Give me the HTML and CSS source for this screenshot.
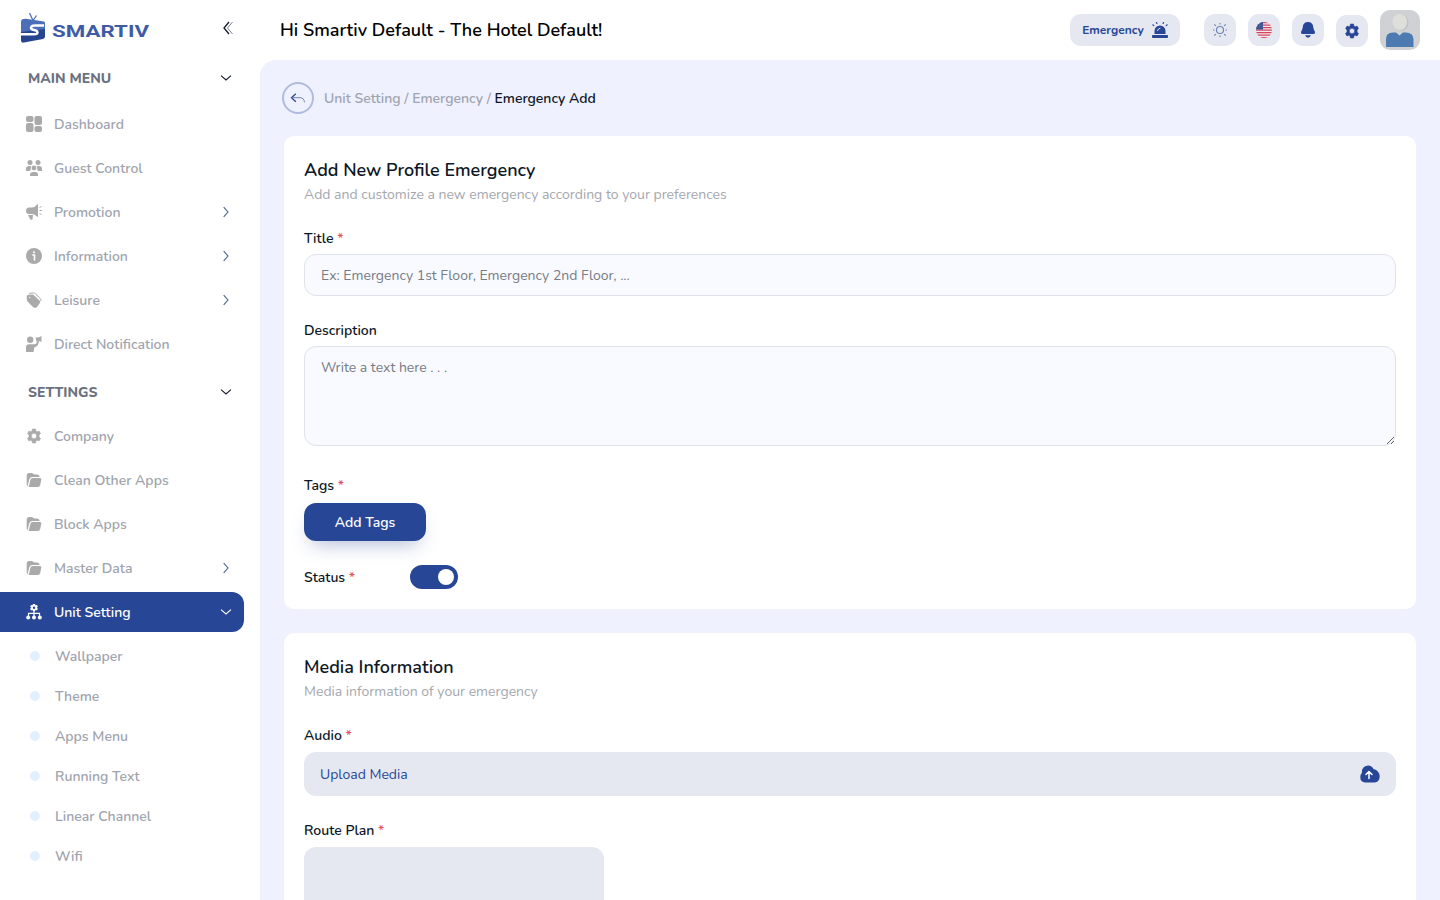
FILE: index.html
```html
<!doctype html>
<html lang="en">
  <head>
    <meta charset="UTF-8" />
    <meta name="viewport" content="width=device-width, initial-scale=1.0" />
    <title>Smartiv - Emergency Add</title>
    <link rel="stylesheet" href="styles.css">
  </head>
  <body>
    <!-- shared icons -->
    <svg class="sprite" width="0" height="0">
      <symbol id="right" viewBox="0 0 16 16"><path d="M5.700 3.200l4.300 4.800-4.300 4.800" fill="none" stroke="currentColor" stroke-width="1.1" /></symbol>
      <symbol id="down" viewBox="0 0 16 16"><path d="M3 5.700l5 4.300 5-4.300" fill="none" stroke="currentColor" stroke-width="1.1" /></symbol>
      <symbol id="folder" viewBox="0 0 16 16">
        <path d="M.7 13V3.500q0-2.500 2.500-2.500h2q1.300 0 2 .8t2 .7h1.800q2.500 0 2.500 2.500H6.500Q4 5 3.300 7.200L1.500 14.200Q.7 13.700.7 13z" />
        <path d="M2.700 15L4.400 7.700Q4.900 6 6.500 6H14q1.700 0 1.300 1.600L14.200 13Q13.700 15 11.700 15z" />
      </symbol>
      <symbol id="gear" viewBox="0 0 16 16">
        <path fill-rule="evenodd" stroke="currentColor" stroke-width=".6" stroke-linejoin="round" d="M6.500 1h3l.4 1.900 1.300.8 1.900-.6 1.400 2.500-1.400 1.300v2.200l1.400 1.300-1.400 2.500-1.900-.6-1.300.8-.4 1.900h-3l-.4-1.900-1.300-.8-1.900.6-1.400-2.500L3 9.100V6.900L1.600 5.600 3 3.100l1.900.6 1.200-.8zM8 5.300a2.700 2.700 0 1 0 0 5.400 2.700 2.700 0 0 0 0-5.400z" />
      </symbol>
    </svg>

    <div class="sidebar">
      <div class="brand">
        <svg class="logo" width="130" height="32" viewBox="0 0 130 32">
          <path d="M1 9.500Q1 7.500 3 7l3-.3 18 2.800q1 .2 1 1.500v9H1z" fill="#4b6fb8" />
          <path d="M1 20l24-3v7.500q0 2-2 2.400L4 30.600q-3 .6-3-2z" fill="#27458f" />
          <path d="M24 13.500h-9q-4 0-4 2.300 0 1.700 3 2.200 3.500.6 3.500 2.500 0 1.800-3.500 1.800H1" fill="none" stroke="#fff" stroke-width="2.400" />
          <path d="M13 8.500L9.500 1M13 8.500l3.500-5" stroke="#4b6fb8" stroke-width="1.300" fill="none" />
          <text x="32" y="24.800" textLength="97" lengthAdjust="spacingAndGlyphs">SMARTIV</text>
        </svg>
        <svg class="collapse" width="14" height="14" viewBox="0 0 14 14">
          <path d="M8 1L3 7l5 6" fill="none" stroke="#111827" stroke-width="1.300" />
          <path d="M11.500 1l-5 6 5 6" fill="none" stroke="#7b808b" stroke-width="1" />
        </svg>
      </div>

      <div class="menu-title"><span>MAIN MENU</span><svg class="chevron"><use href="#down" /></svg></div>
      <ul class="menu main-menu">
        <li><a href="#">
          <svg class="icon" viewBox="0 0 16 16"><rect width="7.500" height="6" rx="2" /><rect y="7" width="7.500" height="9" rx="2" /><rect x="8.500" width="7.500" height="9" rx="2" /><rect x="8.500" y="10" width="7.500" height="6" rx="2" /></svg>
          <span>Dashboard</span></a></li>
        <li><a href="#">
          <svg class="icon" viewBox="0 0 16 16"><circle cx="4" cy="2.500" r="2.500" /><circle cx="12" cy="2.500" r="2.500" /><circle cx="8" cy="8" r="2.400" /><path d="M0 11V9q0-3 3-3h2L4.800 9 4 11zM16 11V9q0-3-3-3h-2l.2 3 .8 2zM4 16v-1.500Q4 12 7 12h2q3 0 3 2.500V16z" /></svg>
          <span>Guest Control</span></a></li>
        <li><a href="#">
          <svg class="icon" viewBox="0 0 16 16"><path d="M0 7q0-3.500 3-3.500h3q3 0 5-3l1-.5v13l-1-.5q-2-2.500-5-2.500H3Q0 10 0 7zM2 11h5l-.5 4.500q-2 1-2.700-1z" /><path d="M13.500 6.500H16M13.500 3.500l2-1M13.500 9.500l2 1" stroke="currentColor" /></svg>
          <span>Promotion</span><svg class="chevron"><use href="#right" /></svg></a></li>
        <li><a href="#">
          <svg class="icon" viewBox="0 0 16 16"><circle cx="8" cy="8" r="8" /><circle cx="8" cy="4.300" r="1" fill="#fff" /><path d="M6.800 7H8.500v5" fill="none" stroke="#fff" stroke-width="1.500" stroke-linecap="round" /></svg>
          <span>Information</span><svg class="chevron"><use href="#right" /></svg></a></li>
        <li><a href="#">
          <svg class="icon" viewBox="0 0 16 16"><path d="M.8 4.500Q.8 3 2.300 2.800L7 2.500l6.500 6q1.500 1.500 0 3L11 14.900q-2 1.900-4 0l-5-5Q.8 8.700.8 7.700z" /><path d="M3 1.400L7.500.9q1 0 2 1l4.600 4.400q1.200 1.200.7 2.700" fill="none" stroke="currentColor" /><circle cx="3.800" cy="5.600" r=".7" fill="#fff" /></svg>
          <span>Leisure</span><svg class="chevron"><use href="#right" /></svg></a></li>
        <li><a href="#">
          <svg class="icon" viewBox="0 0 16 16"><circle cx="4.200" cy="3.700" r="3.200" /><path d="M0 16v-4.500Q0 8.200 3 8.200h5.500q2.300 0 2.500-3.200h1.800q0 5.300-4.300 6.200L7.500 16zM9.500 1.500q3 .5 6-1.500v6q-2.500-1.500-5-.5z" /></svg>
          <span>Direct Notification</span></a></li>
      </ul>

      <div class="menu-title settings"><span>SETTINGS</span><svg class="chevron"><use href="#down" /></svg></div>
      <ul class="menu">
        <li><a href="#"><svg class="icon"><use href="#gear" /></svg><span>Company</span></a></li>
        <li><a href="#"><svg class="icon"><use href="#folder" /></svg><span>Clean Other Apps</span></a></li>
        <li><a href="#"><svg class="icon"><use href="#folder" /></svg><span>Block Apps</span></a></li>
        <li><a href="#"><svg class="icon"><use href="#folder" /></svg><span>Master Data</span><svg class="chevron"><use href="#right" /></svg></a></li>
        <li><a href="#" class="active">
          <svg class="icon" viewBox="0 0 16 16"><path fill-rule="evenodd" d="M7 0h2l.4 1.300 1.500-.4 1 1.500-1 1.200 1 1.300-1 1.500-1.500-.4L9 7.300H7L6.600 6l-1.500.4-1-1.500 1-1.300-1-1.200 1-1.500 1.500.4zM8 2.500a1.200 1.200 0 1 0 0 2.400 1.200 1.200 0 0 0 0-2.400z" /><path d="M8 6.500V12M2.500 12V9.300h11V12" fill="none" stroke="currentColor" stroke-width="1.200" /><circle cx="2.200" cy="13.500" r="2" /><circle cx="8" cy="13.500" r="2" /><circle cx="13.800" cy="13.500" r="2" /></svg>
          <span>Unit Setting</span><svg class="chevron"><use href="#down" /></svg></a></li>
      </ul>
      <ul class="submenu">
        <li><a href="#">Wallpaper</a></li>
        <li><a href="#">Theme</a></li>
        <li><a href="#">Apps Menu</a></li>
        <li><a href="#">Running Text</a></li>
        <li><a href="#">Linear Channel</a></li>
        <li><a href="#">Wifi</a></li>
      </ul>
    </div>

    <div class="main">
      <div class="header">
        <h1>Hi Smartiv Default - The Hotel Default!</h1>
        <div class="tools">
          <button class="emergency-button">
            <span>Emergency</span>
            <svg width="16" height="16" viewBox="0 0 16 16"><path d="M2.500 12V9a5.500 5.500 0 0 1 11 0v3z" /><rect y="13" width="16" height="3" rx="1" /><path d="M.8 2.800l1 .8M15.200 2.800l-1 .8M4.500.5l.4 1M11.500.5l-.4 1" stroke="#284696" stroke-width="1.200" stroke-linecap="round" /><path d="M5.500 8.500Q6 6.500 8 6.200" fill="none" stroke="#e5e8f1" stroke-linecap="round" /></svg>
          </button>
          <button class="tool-button">
            <svg width="16" height="16" viewBox="0 0 16 16"><g fill="none" stroke="#6f84b7" stroke-width="1.200"><circle cx="8" cy="8" r="3.500" /><path d="M8 1v1.500M8 13.500V15M1 8h1.500M13.500 8H15M2.300 2.300l1.500 1.500M12.200 12.200l1.500 1.500M2.300 13.700l1.500-1.500M12.200 3.800l1.500-1.500" /></g></svg>
          </button>
          <button class="tool-button">
            <svg width="16" height="16" viewBox="0 0 16 16">
              <clipPath id="round"><circle cx="8" cy="8" r="8" /></clipPath>
              <g clip-path="url(#round)"><rect width="16" height="16" fill="#f2e8ee" /><path d="M0 .6h16M0 3.100h16M0 5.600h16M0 8.100h16M0 10.600h16M0 13.100h16M0 15.600h16" stroke="#d4455c" stroke-width="1.250" /><rect width="7" height="7.500" fill="#364e8d" /><path d="M1 3h6M1 5h6" stroke="#a6b0cd" stroke-width=".6" stroke-dasharray=".8 1" /></g>
            </svg>
          </button>
          <button class="tool-button">
            <svg width="16" height="16" viewBox="0 0 16 16"><path d="M8 0q5 0 5.300 5.500.2 1.500 1.300 3.500 1.300 3-1.300 3H2.700q-2.600 0-1.300-3 1.100-2 1.300-3.500Q3 0 8 0zM5 13.300h6Q10 15.700 8 15.700T5 13.300z" /></svg>
          </button>
          <button class="tool-button lower"><svg width="16" height="16"><use href="#gear" /></svg></button>
          <svg class="avatar" width="40" height="40" viewBox="0 0 40 40"><rect width="40" height="40" fill="#cfd1d4" /><ellipse cx="21" cy="12.500" rx="7.500" ry="8" fill="#c0c1c1" /><ellipse cx="19.800" cy="12" rx="7.300" ry="8" fill="#dededb" /><path d="M6 37v-8q0-6.500 7-6.500h3l3.500 3 3.500-3h3q7 0 7.500 6.500v8z" fill="#4d7bb1" /></svg>
        </div>
      </div>

      <div class="content">
        <div class="breadcrumb">
          <a href="#" class="back"><svg width="16" height="16" viewBox="0 0 16 16"><path d="M5.800 3.700L1.500 7.700l4.300 4" fill="none" stroke="#284696" stroke-width="1.300" /><path d="M2 7.700h8q4 0 4.500 4.600" fill="none" stroke="#7186b9" /></svg></a>
          <p>Unit Setting / Emergency / <strong>Emergency Add</strong></p>
        </div>

        <div class="card">
          <h2>Add New Profile Emergency</h2>
          <p class="subtitle">Add and customize a new emergency according to your preferences</p>
          <div class="field">
            <label for="title">Title <i>*</i></label>
            <input id="title" type="text" placeholder="Ex: Emergency 1st Floor, Emergency 2nd Floor, ..." />
          </div>
          <div class="field">
            <label for="description">Description</label>
            <textarea id="description" placeholder="Write a text here . . ."></textarea>
          </div>
          <div class="field tags">
            <label>Tags <i>*</i></label>
            <button class="add-button">Add Tags</button>
          </div>
          <div class="status">
            <label>Status <i>*</i></label>
            <div class="toggle"></div>
          </div>
        </div>

        <div class="card">
          <h2>Media Information</h2>
          <p class="subtitle">Media information of your emergency</p>
          <div class="field media">
            <label>Audio <i>*</i></label>
            <div class="upload">
              <span>Upload Media</span>
              <svg width="20" height="18" viewBox="0 0 20 18"><path d="M5 17.500Q.5 17 .3 12.500 0 9.500 1.800 8 1.500 1 8 .5q4 0 5.500 3.500 6 1.500 6.200 7.500-.2 5.500-5.200 6z" fill="#284696" /><path d="M9 13.500V7M6 9.500l3-3 3 3" fill="none" stroke="#fff" stroke-width="1.500" stroke-linecap="round" stroke-linejoin="round" /></svg>
            </div>
          </div>
          <div class="field media">
            <label>Route Plan <i>*</i></label>
            <div class="route-plan"></div>
          </div>
        </div>
      </div>
    </div>
  </body>
</html>
```
FILE: styles.css
```css
* {
  margin: 0;
  padding: 0;
  box-sizing: border-box;
}
body {
  display: flex;
  height: 100vh;
  overflow: hidden;
  background-color: #fff;
  color: #0e1726;
  font-family: "Nunito", "Lato", sans-serif;
  font-size: 14px;
  line-height: 21px;
}
button,
input,
textarea {
  font: inherit;
}
a {
  color: inherit;
  text-decoration: none;
}
.sprite {
  position: absolute;
}

/* Sidebar */
.sidebar {
  width: 260px;
  flex-shrink: 0;
  background-color: #fff;
}
.brand {
  display: flex;
  justify-content: space-between;
  height: 58px;
  padding: 12px 25px 0 20px;
}
.logo text {
  font-family: "Roboto", sans-serif;
  font-size: 17px;
  font-weight: 700;
  fill: #3e5ca5;
}
.collapse {
  margin-top: 9px;
}
.menu-title {
  display: flex;
  align-items: center;
  justify-content: space-between;
  height: 40px;
  padding: 0 26px 0 28px;
  color: #6b7180;
  font-weight: 800;
}
.menu-title.settings {
  margin-top: 8px;
}
.chevron {
  width: 16px;
  height: 16px;
  margin-left: auto;
  color: #111827;
}
.menu {
  display: flex;
  flex-direction: column;
  gap: 4px;
  margin-top: 4px;
  list-style: none;
}
.main-menu {
  margin-top: 6px;
}
.menu a {
  display: flex;
  align-items: center;
  height: 40px;
  width: 244px;
  padding: 0 10px 0 26px;
  border-radius: 0 12px 12px 0;
  color: #a0a4ae;
  font-weight: 600;
}
.menu .icon {
  width: 16px;
  height: 16px;
  margin-right: 12px;
  color: #aaa;
  fill: currentColor;
}
.menu .chevron {
  color: #4c658e;
}
.menu a.active {
  background-color: #284696;
  color: #fff;
}
.menu .active .icon,
.menu .active .chevron {
  color: #fff;
}
.submenu {
  margin-top: 4px;
  list-style: none;
}
.submenu a {
  display: flex;
  align-items: center;
  height: 40px;
  padding-left: 30px;
  color: #a0a4ae;
  font-weight: 600;
}
.submenu a::before {
  content: "";
  width: 10px;
  height: 10px;
  margin-right: 15px;
  border-radius: 50%;
  background-color: #e0f0ff;
}

/* Header */
.main {
  flex: 1;
}
.header {
  display: flex;
  align-items: center;
  justify-content: space-between;
  height: 60px;
  padding: 0 20px;
}
.header h1 {
  color: #000;
  font-size: 18px;
  font-weight: 600;
}
.tools {
  display: flex;
  align-items: center;
  gap: 12px;
}
.tools button {
  display: flex;
  align-items: center;
  justify-content: center;
  height: 32px;
  border: none;
  border-radius: 11px;
  background-color: #e5e8f1;
  color: #284696;
  fill: #284696;
}
.tools .emergency-button {
  width: 110px;
  gap: 8px;
  margin-right: 12px;
  font-size: 12px;
  font-weight: 700;
}
.tools .tool-button {
  width: 32px;
}
.tools .lower {
  margin-top: 1px;
}
.avatar {
  border-radius: 10px;
}

/* Content */
.content {
  height: 840px;
  padding: 22px 24px 0;
  overflow: hidden;
  border-top-left-radius: 16px;
  background-color: #eff1ff;
}
.breadcrumb {
  display: flex;
  align-items: center;
  gap: 10px;
  margin: 0 0 22px -2px;
  color: #a0a4ae;
  font-weight: 600;
}
.breadcrumb strong {
  color: #0e1726;
  font-weight: 600;
}
.back {
  display: flex;
  align-items: center;
  justify-content: center;
  width: 32px;
  height: 32px;
  border: 2px solid #b1bbdd;
  border-radius: 50%;
}
.card {
  margin-bottom: 24px;
  padding: 20px;
  border-radius: 10px;
  background-color: #fff;
}
.card h2 {
  font-size: 18px;
  font-weight: 600;
  line-height: 28px;
}
.subtitle {
  margin-bottom: 23px;
  color: #a4a7ae;
}
.field {
  margin-bottom: 24px;
}
label {
  display: block;
  margin-bottom: 5px;
  font-weight: 600;
}
label i {
  color: #e2525f;
  font-style: normal;
}
.field input,
.field textarea {
  display: block;
  width: 100%;
  height: 42px;
  padding: 0 16px;
  border: 1px solid #dfe2ed;
  border-radius: 12px;
  background-color: #f9faff;
}
.field textarea {
  height: 100px;
  padding-top: 10px;
}
.field input::placeholder,
.field textarea::placeholder {
  color: #777b84;
}
.tags {
  margin-top: 29px;
}
.tags label {
  margin-bottom: 7px;
}
.add-button {
  display: block;
  width: 122px;
  height: 38px;
  border: none;
  border-radius: 12px;
  background-color: #284696;
  box-shadow: 0 10px 20px -8px rgba(40, 70, 150, 0.4);
  color: #fff;
  font-weight: 600;
}
.status {
  display: flex;
  align-items: center;
}
.status label {
  width: 106px;
  margin-bottom: 0;
}
.toggle {
  width: 48px;
  height: 24px;
  padding: 4px;
  border-radius: 12px;
  background-color: #284696;
}
.toggle::before {
  content: "";
  display: block;
  width: 16px;
  height: 16px;
  margin-left: auto;
  border-radius: 50%;
  background-color: #fff;
}
.media label {
  margin-bottom: 5.5px;
}
.upload {
  display: flex;
  align-items: center;
  justify-content: space-between;
  height: 44.5px;
  padding: 0 16px;
  border-radius: 12px;
  background-color: #e5e8f1;
  color: #284696;
}
.upload span {
  padding-top: 1px;
}
.route-plan {
  width: 300px;
  height: 160px;
  border-radius: 12px;
  background-color: #e5e8f1;
}
```
